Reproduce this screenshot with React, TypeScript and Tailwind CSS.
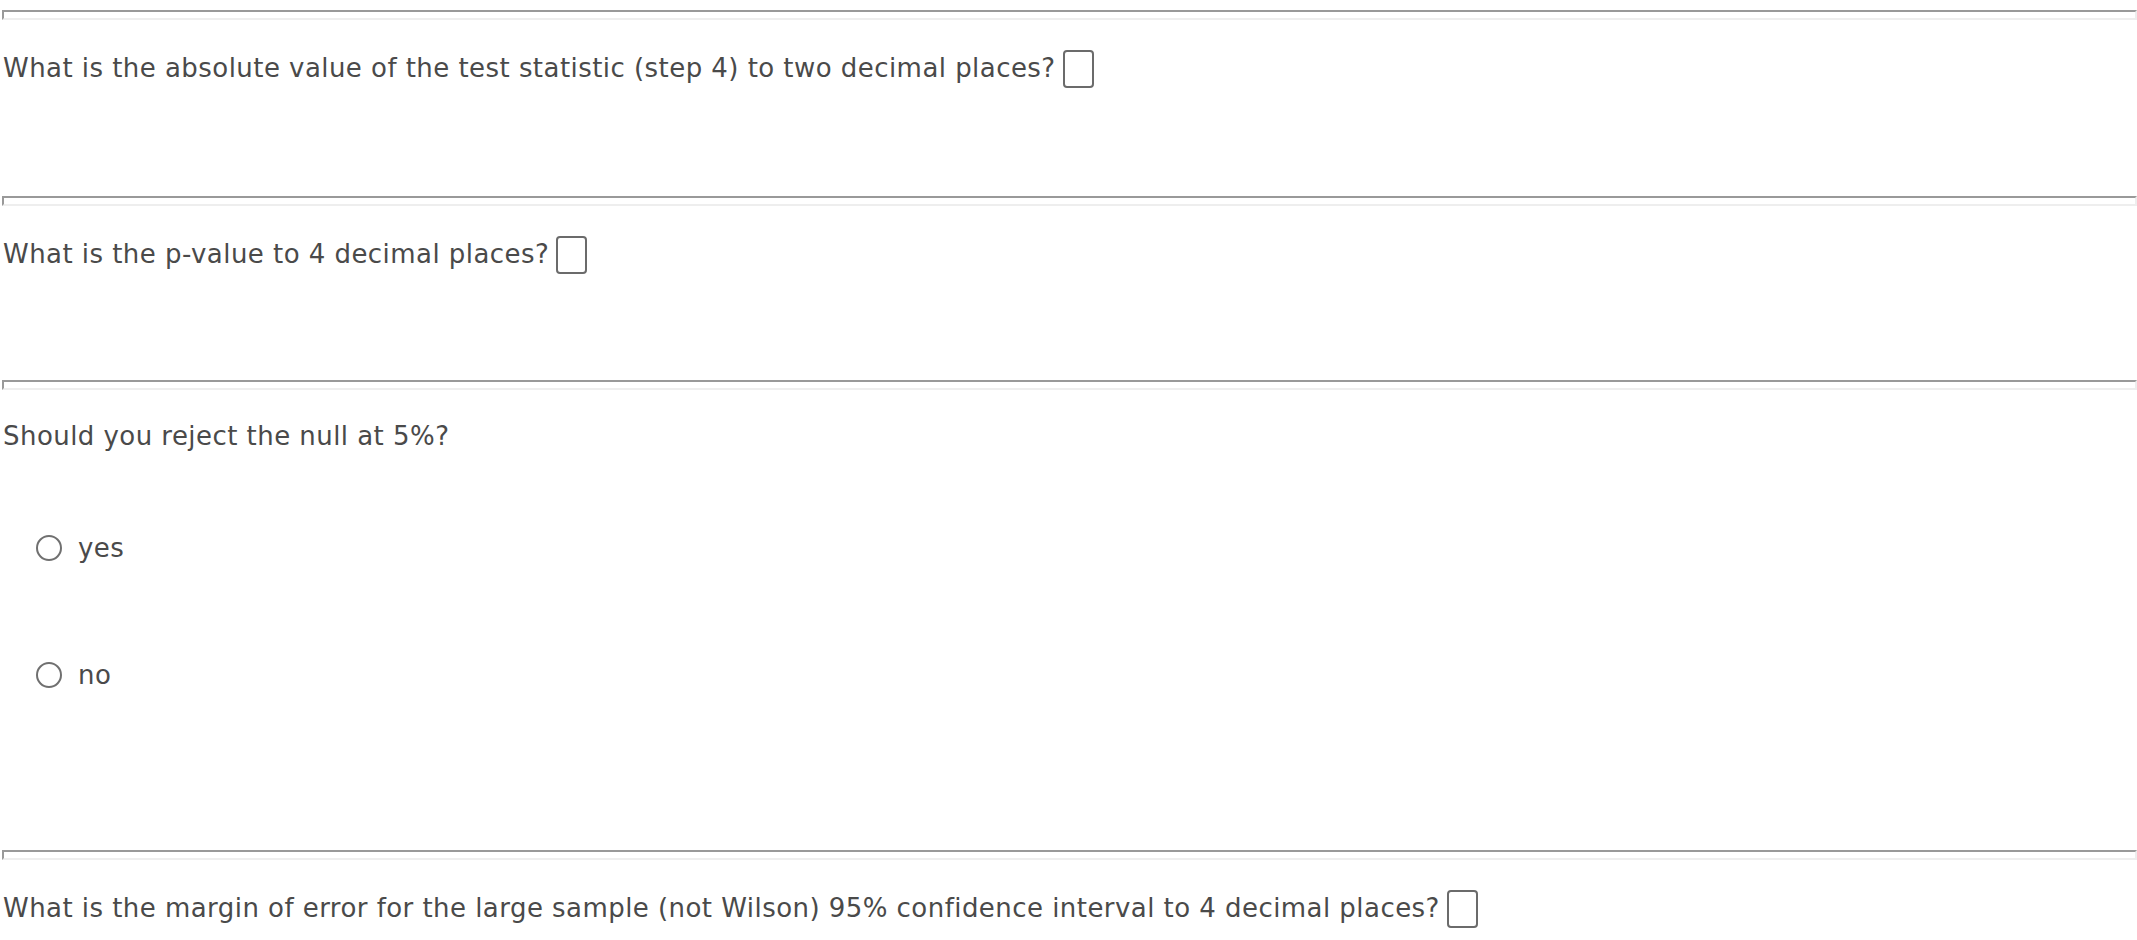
import React from "react";

function Rule({ className = "" }: { className?: string }) {
  return (
    <div
      className={
        "ml-[2px] h-[10px] border-2 border-t-[#999999] border-l-[#999999] border-b-[#eeeeee] border-r-[#eeeeee] " +
        className
      }
    />
  );
}

function Box() {
  return (
    <span className="ml-[7px] inline-block h-[38px] w-[31px] rounded-[4px] border-2 border-[#6b6b6b] align-[-11px]" />
  );
}

function Radio({ label, className = "" }: { label: string; className?: string }) {
  return (
    <div className={"flex items-center pl-[36px] leading-[36px] " + className}>
      <span className="inline-block h-[26px] w-[26px] rounded-full border-2 border-[#707070]" />
      <span className="ml-[16px]">{label}</span>
    </div>
  );
}

export default function App() {
  return (
    <div className="min-h-[940px] w-full bg-white font-['DejaVu_Sans','Verdana',sans-serif] text-[26px] tracking-[0.45px] text-[#4a4a4a]">
      <div className="pt-[10px]">
        <Rule />
      </div>
      <p className="mt-[28px] pl-[3px] leading-[40px]">
        What is the absolute value of the test statistic (step 4) to two decimal places?
        <Box />
      </p>
      <Rule className="mt-[108px]" />
      <p className="mt-[28px] pl-[3px] leading-[40px]">
        What is the p-value to 4 decimal places?
        <Box />
      </p>
      <Rule className="mt-[106px]" />
      <p className="mt-[26px] pl-[3px] leading-[40px]">Should you reject the null at 5%?</p>
      <Radio label="yes" className="mt-[74px]" />
      <Radio label="no" className="mt-[91px]" />
      <Rule className="mt-[157px]" />
      <p className="mt-[28px] pl-[3px] leading-[40px]">
        What is the margin of error for the large sample (not Wilson) 95% confidence interval to 4 decimal places?
        <Box />
      </p>
    </div>
  );
}
